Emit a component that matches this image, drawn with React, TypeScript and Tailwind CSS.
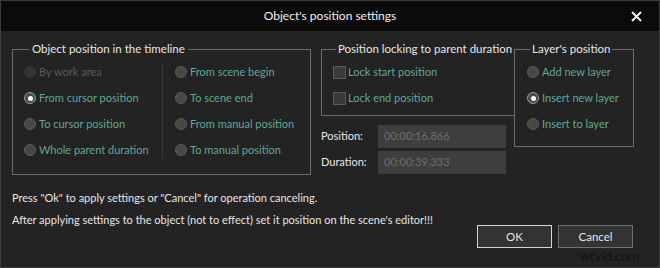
import React from "react";

const font = { fontFamily: 'Lato, "Noto Sans", sans-serif' };

function Radio({ label, checked = false, disabled = false }: { label: string; checked?: boolean; disabled?: boolean }) {
  return (
    <div className="flex h-[26px] items-center whitespace-nowrap">
      <span
        className={
          "flex h-[12px] w-[12px] shrink-0 items-center justify-center rounded-full border " +
          (disabled
            ? "border-[#353535] bg-[#353535]"
            : checked
            ? "border-[#9a9a9a] bg-[#4a4a4a]"
            : "border-[#5a5a5a] bg-[#474747]")
        }
      >
        {checked && <span className="h-[5px] w-[5px] rounded-full bg-white" />}
      </span>
      <span className={"ml-[3px] " + (disabled ? "text-[#5a5a5a]" : "text-[#62a596]")}>{label}</span>
    </div>
  );
}

function Check({ label }: { label: string }) {
  return (
    <div className="flex h-[26px] items-center whitespace-nowrap">
      <span className="h-[13px] w-[13px] shrink-0 border border-[#5a5a5a] bg-[#3a3a3a]" />
      <span className="ml-[2px] text-[#62a596]">{label}</span>
    </div>
  );
}

export default function App() {
  return (
    <div
      className="flex h-[268px] w-[660px] flex-col overflow-hidden whitespace-nowrap border border-[#3c3c3c] bg-[#232323] text-[11px] leading-[16px] text-[#e6e6e6]"
      style={font}
    >
      <div className="relative flex h-[30px] shrink-0 items-center justify-center bg-[#0b0b0b] text-[12px] text-[#f0f0f0]">
        Object's position settings
        <svg className="absolute right-[17px] top-[10px]" width="11" height="11" viewBox="0 0 11 11">
          <path d="M1 1L10 10M10 1L1 10" stroke="#f0f0f0" strokeWidth="2" />
        </svg>
      </div>

      <div className="flex pl-[11px] pt-[10px]">
        <fieldset className="h-[134px] w-[299px] shrink-0 border border-[#6b6b6b] pl-[11px]">
          <legend className="ml-[5px] px-[3px] text-[11.5px] text-[#e6e6e6]">Object position in the timeline</legend>
          <div className="mt-[2px] flex">
            <div className="w-[138px]">
              <Radio label="By work area" disabled />
              <Radio label="From cursor position" checked />
              <Radio label="To cursor position" />
              <Radio label="Whole parent duration" />
            </div>
            <div className="mt-[5px] h-[95px] w-px bg-[#3a3a3a]" />
            <div className="ml-[12px]">
              <Radio label="From scene begin" />
              <Radio label="To scene end" />
              <Radio label="From manual position" />
              <Radio label="To manual position" />
            </div>
          </div>
        </fieldset>

        <div className="ml-[10px] w-[186px] shrink-0">
          <fieldset className="h-[75px] w-[176px] border border-[#6b6b6b] pl-[11px]">
            <legend className="ml-[3px] px-[2px] text-[11.5px] text-[#e6e6e6]">Position locking to parent duration</legend>
            <div className="mt-[2px]">
              <Check label="Lock start position" />
              <Check label="Lock end position" />
            </div>
          </fieldset>
          <div className="mt-[8px] flex h-[24px] items-center">
            <span className="w-[57px]">Position:</span>
            <div className="flex h-[23px] w-[128px] items-center bg-[#3e3e3e] pl-[6px] text-[#6e6e6e]">00:00:16.866</div>
          </div>
          <div className="mt-[2px] flex h-[24px] items-center">
            <span className="w-[57px]">Duration:</span>
            <div className="flex h-[23px] w-[128px] items-center bg-[#3e3e3e] pl-[6px] text-[#6e6e6e]">00:00:39.333</div>
          </div>
        </div>

        <fieldset className="ml-[7px] h-[106px] w-[120px] shrink-0 border border-[#6b6b6b] pl-[12px]">
          <legend className="ml-[3px] px-[2px] text-[11.5px] text-[#e6e6e6]">Layer's position</legend>
          <div className="mt-[2px]">
            <Radio label="Add new layer" />
            <Radio label="Insert new layer" checked />
            <Radio label="Insert to layer" />
          </div>
        </fieldset>
      </div>

      <div className="mt-[12px] pl-[11px]">
        <div className="h-[22px] leading-[22px]">Press "Ok" to apply settings or "Cancel" for operation canceling.</div>
        <div className="h-[22px] leading-[22px]">After applying settings to the object (not to effect) set it position on the scene's editor!!!</div>
      </div>

      <div className="-mt-[6px] flex justify-end pr-[26px]">
        <button className="h-[23px] w-[75px] border border-[#d4d4d4] bg-[#333333] text-[11.5px] text-[#e6e6e6]">OK</button>
        <button className="ml-[6px] h-[23px] w-[75px] border border-[#707070] bg-[#333333] text-[11.5px] text-[#e6e6e6]">Cancel</button>
      </div>
      <div className="flex justify-end pr-[20px] text-[13px] leading-[16px] text-[#121212]">wtvid.com</div>
    </div>
  );
}
